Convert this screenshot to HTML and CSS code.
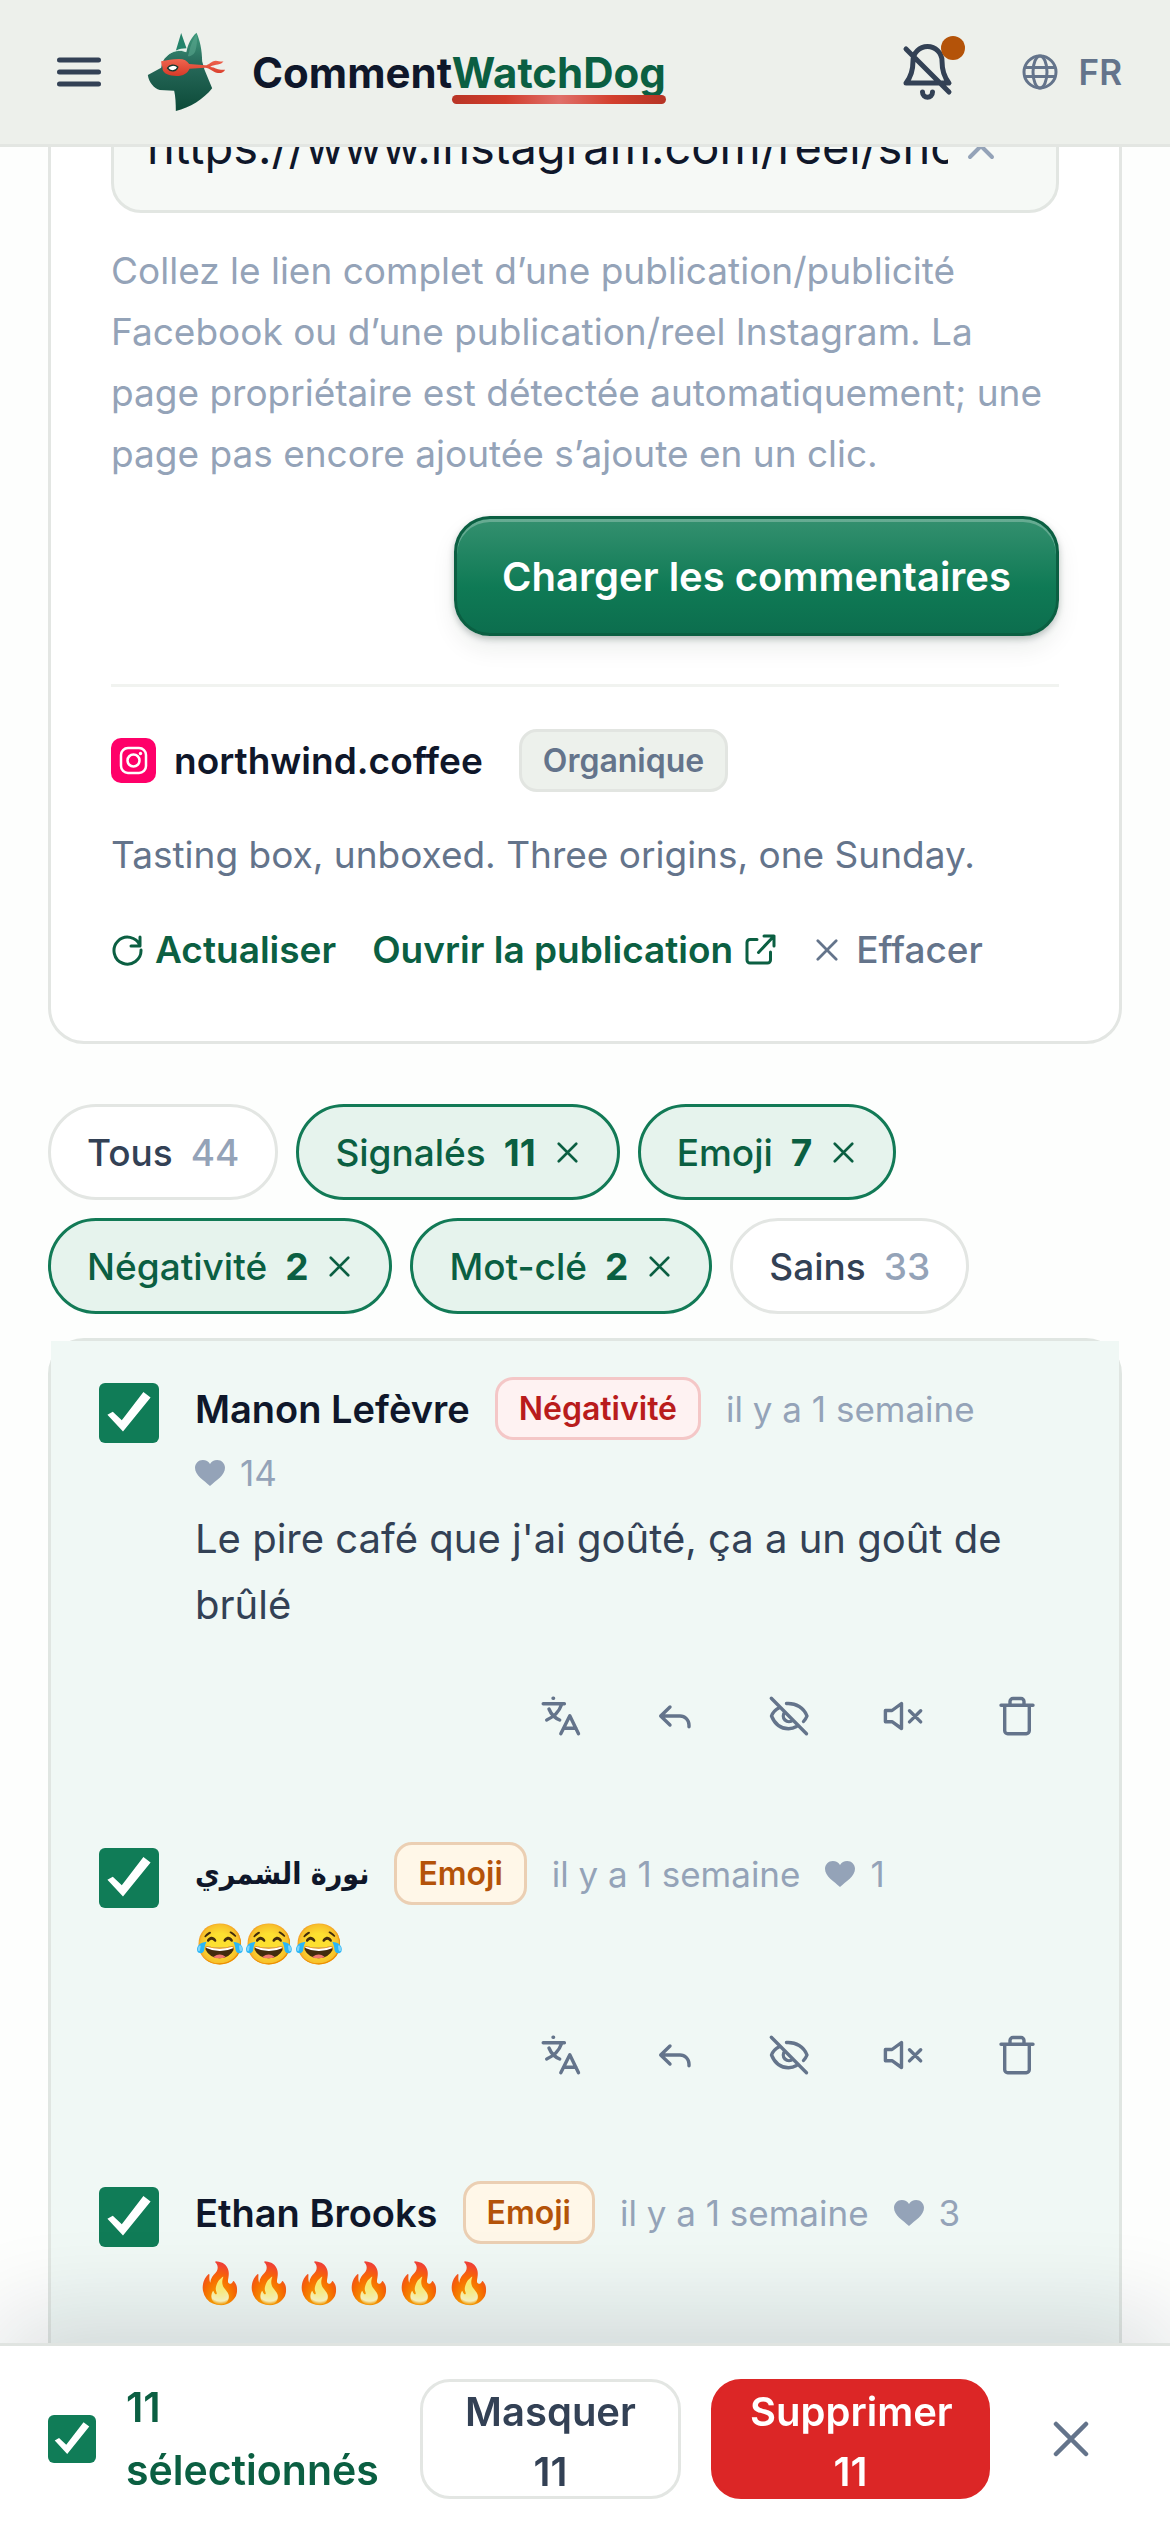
FILE: index.html
```html
<!DOCTYPE html>
<html lang="fr">
<head>
    <meta charset="UTF-8">
    <meta name="viewport" content="width=device-width, initial-scale=1.0">
    <title>CommentWatchDog</title>
    <link rel="stylesheet" href="styles.css">
</head>
<body>
    <!-- Icons shared by every comment row -->
    <svg class="sprite" aria-hidden="true">
        <symbol id="i-translate" viewBox="0 0 42 42"><path stroke-width="3.4" d="M13 3.3h.6M3.2 8.700h21.200M21.600 9.500C19 17 13.500 22 6.700 25M9 14c2 5 6 9 10.700 11M20.800 38.700 29.800 20.700l8.700 18M24 33.200h12"/></symbol>
        <symbol id="i-reply" viewBox="0 0 42 42"><path stroke-width="3.4" d="M16 12 6.700 21l9.300 9M6.700 21H26a9 9 0 0 1 9 9v1.700"/></symbol>
        <symbol id="i-hide" viewBox="0 0 42 42"><path stroke-width="3.4" d="M3.300 3.300l35.200 35.400M11 12.700C7 15 4.500 18 3.500 21 7 29.500 13 33.700 20.500 33.700c3 0 5.500-.7 8-2.200M18.500 8.500C28 7.800 36 13 39 21c-.9 2.300-2 3.800-3.500 5.500M17 17a5.500 5.500 0 0 0 8 8"/></symbol>
        <symbol id="i-mute" viewBox="0 0 42 42"><path stroke-width="3.4" d="M3.400 15.500H10l9.500-7v25L10 26.700H3.400zM27.500 15.700l11.200 11.200M38.700 15.700 27.500 26.900"/></symbol>
        <symbol id="i-trash" viewBox="0 0 42 42"><path stroke-width="3.4" d="M5 10.300h32M14 10V6.500a3 3 0 0 1 3-3h8a3 3 0 0 1 3 3V10M8.700 10.300v25.400a3 3 0 0 0 3 3h18.600a3 3 0 0 0 3-3V10.300"/></symbol>
        <symbol id="i-heart" viewBox="0 0 30 26"><path d="M15 26C9 20.500 0 15.500 0 7.800 0 3.500 3.500 0 7.800 0 11 0 13.500 1.600 15 4c1.500-2.400 4-4 7.200-4C26.500 0 30 3.500 30 7.800 30 15.500 21 20.500 15 26z"/></symbol>
        <symbol id="i-x" viewBox="0 0 24 24"><path d="M2 2l20 20M22 2 2 22"/></symbol>
    </svg>

    <header class="topbar">
        <button class="icon-btn menu-btn" aria-label="Menu">
            <svg width="44" height="30" viewBox="0 0 44 30"><path d="M2.500 3h39M2.500 15h39M2.500 27h39"/></svg>
        </button>
        <a class="brand" href="#">
            <svg class="brand-logo" width="79" height="80" viewBox="50 36 236 240">
                <defs>
                    <linearGradient id="fur" x1="0" y1="0" x2="0" y2="1">
                        <stop offset="0" stop-color="#3f9a7c"/>
                        <stop offset=".4" stop-color="#27695a"/>
                        <stop offset="1" stop-color="#0c4a38"/>
                    </linearGradient>
                    <linearGradient id="mask" x1="0" y1="0" x2="0" y2="1">
                        <stop offset="0" stop-color="#f0654f"/>
                        <stop offset="1" stop-color="#d63a28"/>
                    </linearGradient>
                </defs>
                <path fill="#24836a" d="M136 92 152 39l16 46c-12 0-22 2-32 7z"/>
                <path fill="url(#fur)" d="M52 165l40-22c3-26 24-50 58-52l18 4c4-22 14-43 30-57 10 22 17 52 17 86l7 25 23 56c-25 32-67 59-109 68 0-23-1-44-5-61l-43-2C70 205 55 187 52 165z"/>
                <path fill="none" stroke="#dcefe6" stroke-width="3" d="M104 112c12-14 28-21 48-21l14 4"/>
                <path fill="#5aa78d" opacity=".6" d="M176 95c4-20 12-38 22-52 3 14 2 34-4 52-6 10-14 14-22 14z"/>
                <path fill="url(#mask)" d="M92 124c18-4 34-6 52-7 14-1 26 5 32 15l48 4c12-1 18-13 32-14 8 0 14 4 23 2-7 12-24 8-40 16 18 3 26 12 45 9-5 10-16 12-26 9-12-4-20-14-34-15l-47 3c-5 13-19 22-39 22-22 0-38-6-42-20 2-8-4-10-4-24z"/>
                <path fill="#fff" d="M112 145c6-9 20-11 29-4-3 11-20 16-29 4z"/>
                <path fill="none" stroke="#123a30" stroke-width="4" d="M111 144c6-9 21-12 31-3-3 12-21 17-31 3z"/>
            </svg>
            <span class="brand-name">Comment<span class="brand-accent">WatchDog</span></span>
        </a>
        <button class="icon-btn bell-btn" aria-label="Notifications">
            <svg width="54" height="60" viewBox="0 0 54 60"><path d="M5 41c5-6 7-12 7-22a14.500 14.500 0 0 1 29 0c0 10 2 16 7 22zM5 7l43 43M21.500 50c0 7 10 7 10 0"/></svg>
            <span class="bell-dot"></span>
        </button>
        <button class="lang-btn">
            <svg width="36" height="36" viewBox="0 0 36 36"><circle cx="18" cy="18" r="16"/><ellipse cx="18" cy="18" rx="7" ry="16"/><path d="M3 13.500h30M3 22.500h30"/></svg>
            FR
        </button>
    </header>

    <main class="page">
        <section class="card">
            <div class="url-box">
                <input class="url-input" type="text" aria-label="Lien" value="https://www.instagram.com/reel/shopnorthwind">
                <button class="icon-btn chevron" aria-label="Replier">
                    <svg width="30" height="26" viewBox="0 0 30 26"><path d="M4 23 15 12l11 11"/></svg>
                </button>
            </div>
            <p class="hint">Collez le lien complet d’une publication/publicité Facebook ou d’une publication/reel Instagram. La page propriétaire est détectée automatiquement; une page pas encore ajoutée s’ajoute en un clic.</p>
            <button class="load-btn">Charger les commentaires</button>

            <div class="source">
                <div class="source-head">
                    <svg class="ig" width="45" height="45" viewBox="0 0 45 45">
                        <rect width="45" height="45" rx="10" fill="#ff0069"/>
                        <g fill="none" stroke="#fff" stroke-width="2.500">
                            <rect x="10" y="10" width="25" height="25" rx="7"/>
                            <circle cx="22.500" cy="22.500" r="6"/>
                        </g>
                        <circle cx="29.500" cy="15.500" r="1.700" fill="#fff"/>
                    </svg>
                    <span class="source-name">northwind.coffee</span>
                    <span class="badge badge-neutral">Organique</span>
                </div>
                <p class="caption">Tasting box, unboxed. Three origins, one Sunday.</p>
                <div class="source-actions">
                    <button class="text-btn">
                        <svg width="33" height="33" viewBox="0 0 33 33"><path d="M29 4v9h-9M29 12.500A13.500 13.500 0 1 0 30 17"/></svg>
                        Actualiser
                    </button>
                    <a class="text-btn" href="#">
                        Ouvrir la publication
                        <svg width="33" height="33" viewBox="0 0 33 33"><path d="M13 6.500H6a3 3 0 0 0-3 3V27a3 3 0 0 0 3 3h17.500a3 3 0 0 0 3-3v-8M20 3h10v10M30 3 14.500 19.500"/></svg>
                    </a>
                    <button class="text-btn text-btn-muted">
                        <svg width="22" height="22"><use href="#i-x"/></svg>
                        Effacer
                    </button>
                </div>
            </div>
        </section>

        <div class="chips">
            <button class="chip">Tous <span class="count">44</span></button>
            <button class="chip chip-on">Signalés <span class="count">11</span><svg width="21" height="21"><use href="#i-x"/></svg></button>
            <button class="chip chip-on">Emoji <span class="count">7</span><svg width="21" height="21"><use href="#i-x"/></svg></button>
            <button class="chip chip-on">Négativité <span class="count">2</span><svg width="21" height="21"><use href="#i-x"/></svg></button>
            <button class="chip chip-on">Mot-clé <span class="count">2</span><svg width="21" height="21"><use href="#i-x"/></svg></button>
            <button class="chip">Sains <span class="count">33</span></button>
        </div>

        <section class="list">
            <article class="comment">
                <input class="check" type="checkbox" aria-label="Manon Lefèvre" checked>
                <div class="comment-body">
                    <div class="meta">
                        <span class="author">Manon Lefèvre</span>
                        <span class="badge badge-red">Négativité</span>
                        <span class="time">il y a 1 semaine</span>
                        <span class="likes"><svg width="30" height="26"><use href="#i-heart"/></svg>14</span>
                    </div>
                    <p class="text">Le pire café que j'ai goûté, ça a un goût de brûlé</p>
                    <div class="actions">
                        <button class="action" aria-label="Traduire"><svg><use href="#i-translate"/></svg></button>
                        <button class="action" aria-label="Répondre"><svg><use href="#i-reply"/></svg></button>
                        <button class="action" aria-label="Masquer"><svg><use href="#i-hide"/></svg></button>
                        <button class="action" aria-label="Muet"><svg><use href="#i-mute"/></svg></button>
                        <button class="action" aria-label="Supprimer"><svg><use href="#i-trash"/></svg></button>
                    </div>
                </div>
            </article>

            <article class="comment">
                <input class="check" type="checkbox" aria-label="نورة الشمري" checked>
                <div class="comment-body">
                    <div class="meta">
                        <span class="author" lang="ar">نورة الشمري</span>
                        <span class="badge badge-amber">Emoji</span>
                        <span class="time">il y a 1 semaine</span>
                        <span class="likes"><svg width="30" height="26"><use href="#i-heart"/></svg>1</span>
                    </div>
                    <p class="text">😂😂😂</p>
                    <div class="actions">
                        <button class="action" aria-label="Traduire"><svg><use href="#i-translate"/></svg></button>
                        <button class="action" aria-label="Répondre"><svg><use href="#i-reply"/></svg></button>
                        <button class="action" aria-label="Masquer"><svg><use href="#i-hide"/></svg></button>
                        <button class="action" aria-label="Muet"><svg><use href="#i-mute"/></svg></button>
                        <button class="action" aria-label="Supprimer"><svg><use href="#i-trash"/></svg></button>
                    </div>
                </div>
            </article>

            <article class="comment">
                <input class="check" type="checkbox" aria-label="Ethan Brooks" checked>
                <div class="comment-body">
                    <div class="meta">
                        <span class="author">Ethan Brooks</span>
                        <span class="badge badge-amber">Emoji</span>
                        <span class="time">il y a 1 semaine</span>
                        <span class="likes"><svg width="30" height="26"><use href="#i-heart"/></svg>3</span>
                    </div>
                    <p class="text">🔥🔥🔥🔥🔥🔥</p>
                    <div class="actions">
                        <button class="action" aria-label="Traduire"><svg><use href="#i-translate"/></svg></button>
                        <button class="action" aria-label="Répondre"><svg><use href="#i-reply"/></svg></button>
                        <button class="action" aria-label="Masquer"><svg><use href="#i-hide"/></svg></button>
                        <button class="action" aria-label="Muet"><svg><use href="#i-mute"/></svg></button>
                        <button class="action" aria-label="Supprimer"><svg><use href="#i-trash"/></svg></button>
                    </div>
                </div>
            </article>
        </section>
    </main>

    <div class="bulkbar">
        <input class="check check-sm" type="checkbox" id="selectAll" checked>
        <label class="bulk-label" for="selectAll">11 sélectionnés</label>
        <button class="bulk-btn">Masquer 11</button>
        <button class="bulk-btn bulk-danger">Supprimer 11</button>
        <button class="icon-btn bulk-close" aria-label="Fermer"><svg width="36" height="36"><use href="#i-x"/></svg></button>
    </div>
</body>
</html>
```
FILE: styles.css
```css
* {
    box-sizing: border-box;
}
html {
    overflow: hidden;
}
body {
    margin: 0;
    font-family: Inter, "Noto Color Emoji", "Noto Sans", "DejaVu Sans", sans-serif;
    font-size: 37px;
    color: #334155;
    background: #fdfefd;
}
p {
    margin: 0;
}
button {
    font: inherit;
    color: inherit;
    background: none;
    border: 0;
    padding: 0;
    cursor: pointer;
}
a {
    color: inherit;
    text-decoration: none;
}
svg {
    flex: none;
    fill: none;
    stroke: currentColor;
    stroke-width: 3;
    stroke-linecap: round;
    stroke-linejoin: round;
}
.sprite {
    display: none;
}
.icon-btn {
    display: flex;
    align-items: center;
    justify-content: center;
}

/* Top bar */
.topbar {
    position: fixed;
    top: 0;
    left: 0;
    right: 0;
    z-index: 10;
    height: 147px;
    padding: 0 48px 0 57px;
    display: flex;
    align-items: center;
    background: #edf0eb;
    border-bottom: 3px solid #e3e6e2;
}
.menu-btn svg {
    stroke-width: 5;
}
.brand {
    display: flex;
    align-items: center;
    gap: 26px;
    margin-left: 46px;
}
.brand-logo {
    stroke: none;
}
.brand-name {
    font-size: 42px;
    font-weight: 700;
    line-height: 63px;
    color: #0f172a;
}
.brand-accent {
    position: relative;
    color: #0b5f42;
}
.brand-accent::after {
    content: "";
    position: absolute;
    left: 0;
    right: 0;
    bottom: -6px;
    height: 9px;
    border-radius: 5px;
    background: linear-gradient(90deg, #b93526, #d13c2b 25%, #e0706a 50%, #d33f2d 75%, #b53425);
}
.bell-btn {
    position: relative;
    margin-left: auto;
}
.bell-btn svg {
    stroke-width: 5;
}
.bell-dot {
    position: absolute;
    top: -6px;
    right: -10px;
    width: 24px;
    height: 24px;
    border-radius: 50%;
    background: #b45309;
}
.lang-btn {
    display: flex;
    align-items: center;
    gap: 21px;
    margin-left: 67px;
    font-size: 35px;
    font-weight: 600;
    color: #64748b;
}

/* Source card */
.page {
    padding: 18px 48px 0;
}
.card {
    padding: 60px;
    background: #fff;
    border: 3px solid #e3e6e3;
    border-radius: 36px;
}
.url-box {
    display: flex;
    align-items: center;
    height: 132px;
    padding: 0 60px 0 33px;
    background: #f6f9f6;
    border: 3px solid #e2e6e2;
    border-radius: 30px;
}
.url-input {
    flex: 1;
    min-width: 0;
    padding: 0;
    border: 0;
    outline: 0;
    background: none;
    font: inherit;
    font-size: 47px;
    line-height: 60px;
    color: #0f172a;
}
.chevron {
    margin-left: 18px;
    color: #94a3b8;
}
.chevron svg {
    stroke-width: 4;
}
.hint {
    margin-top: 27px;
    line-height: 61px;
    color: #94a3b8;
}
.load-btn {
    display: block;
    height: 120px;
    margin: 32px 0 0 auto;
    padding: 0 45px;
    font-size: 40px;
    font-weight: 600;
    color: #fff;
    background: linear-gradient(#34906f, #0f7a55 60%, #0c6e4e);
    border: 3px solid #0b5f42;
    border-radius: 36px;
    box-shadow: inset 0 3px 0 rgba(255,255,255,0.25), 0 3px 6px rgba(15,40,30,0.25), 0 12px 24px rgba(15,40,30,0.08);
}
.source {
    margin-top: 48px;
    padding-top: 42px;
    border-top: 3px solid #f1f3f0;
}
.source-head {
    display: flex;
    align-items: center;
}
.ig {
    stroke: none;
}
.source-name {
    margin: 0 36px 0 18px;
    font-weight: 600;
    color: #0f172a;
}
.badge {
    height: 63px;
    padding: 0 21px;
    font-size: 32px;
    font-weight: 600;
    line-height: 57px;
    border: 3px solid;
    border-radius: 18px;
}
.badge-neutral {
    color: #64748b;
    background: #edf1ec;
    border-color: #e2e5e1;
}
.badge-red {
    color: #b91c1c;
    background: #fef2f2;
    border-color: #f4c7c7;
}
.badge-amber {
    color: #b45309;
    background: #fff7e8;
    border-color: #ebcfb3;
}
.caption {
    margin-top: 33px;
    line-height: 60px;
    color: #64748b;
}
.source-actions {
    display: flex;
    gap: 36px;
    margin-top: 33px;
}
.text-btn {
    display: flex;
    align-items: center;
    gap: 11px;
    font-weight: 600;
    line-height: 63px;
    color: #0b5f42;
}
.text-btn-muted {
    gap: 18px;
    margin-left: 3px;
    font-weight: 500;
    color: #64748b;
}

/* Filter chips */
.chips {
    display: flex;
    flex-wrap: wrap;
    gap: 18px;
    margin-top: 60px;
}
.chip {
    display: flex;
    align-items: center;
    gap: 18px;
    height: 96px;
    padding: 0 36px;
    font-weight: 500;
    background: #fff;
    border: 3px solid #e3e6e3;
    border-radius: 48px;
}
.chip svg {
    margin: 0 3px;
}
.chip .count {
    color: #94a3b8;
}
.chip-on {
    color: #0b5f42;
    background: #e6f3ed;
    border-color: #127a56;
}
.chip-on .count {
    font-weight: 700;
    color: inherit;
}

/* Comments */
.list {
    margin-top: 24px;
    border: 3px solid #e0e6e2;
    border-radius: 36px;
}
.comment {
    display: flex;
    align-items: flex-start;
    gap: 36px;
    padding: 36px 48px;
    background: #f0f8f5;
}
.check {
    appearance: none;
    flex: none;
    width: 60px;
    height: 60px;
    margin: 6px 0 0;
    border: 3px solid #cbd5e1;
    border-radius: 6px;
    background: #fff;
}
.check:checked {
    border: 0;
    background: #107c57;
}
.check:checked::before {
    content: "";
    display: block;
    height: 100%;
    background: #fff;
    clip-path: polygon(14% 53%, 23% 48%, 38% 62%, 74% 15%, 86% 24%, 40% 81%);
}
.check-sm {
    width: 48px;
    height: 48px;
    margin: 0;
}
.comment-body {
    flex: 1;
    min-width: 0;
}
.meta {
    display: flex;
    flex-wrap: wrap;
    align-items: center;
    gap: 6px 25px;
    margin-bottom: 6px;
}
.author {
    font-size: 38px;
    font-weight: 600;
    line-height: 60px;
    color: #0f172a;
}
.author:lang(ar) {
    font-family: "DejaVu Sans Condensed", "DejaVu Sans", sans-serif;
    font-size: 30px;
}
.time,
.likes {
    font-size: 35px;
    line-height: 54px;
    color: #94a3b8;
}
.likes {
    display: flex;
    align-items: center;
    gap: 15px;
}
.likes svg {
    fill: currentColor;
    stroke: none;
}
.text {
    font-size: 40px;
    line-height: 66px;
}
.actions {
    display: flex;
    justify-content: flex-end;
    gap: 6px;
    margin-top: 24px;
}
.action {
    display: flex;
    align-items: center;
    justify-content: center;
    width: 108px;
    height: 108px;
    color: #64748b;
}
.action svg {
    width: 42px;
    height: 42px;
}

/* Selection bar */
.bulkbar {
    position: fixed;
    left: 0;
    right: 0;
    bottom: 0;
    z-index: 10;
    display: flex;
    align-items: center;
    gap: 30px;
    padding: 30px 48px;
    background: #fff;
    border-top: 3px solid #e0e4e1;
    box-shadow: 0 -24px 96px rgba(15,23,42,0.14);
}
.bulk-label {
    flex: 1;
    font-size: 41px;
    font-weight: 600;
    line-height: 63px;
    color: #0b5f42;
}
.bulk-btn {
    width: 261px;
    height: 120px;
    padding: 0 36px;
    font-size: 40px;
    font-weight: 600;
    line-height: 60px;
    background: #fff;
    border: 3px solid #e3e6e3;
    border-radius: 30px;
}
.bulk-danger {
    width: 279px;
    color: #fff;
    background: #dc2626;
    border-color: #dc2626;
}
.bulk-close {
    width: 102px;
    height: 102px;
    color: #64748b;
}
```
